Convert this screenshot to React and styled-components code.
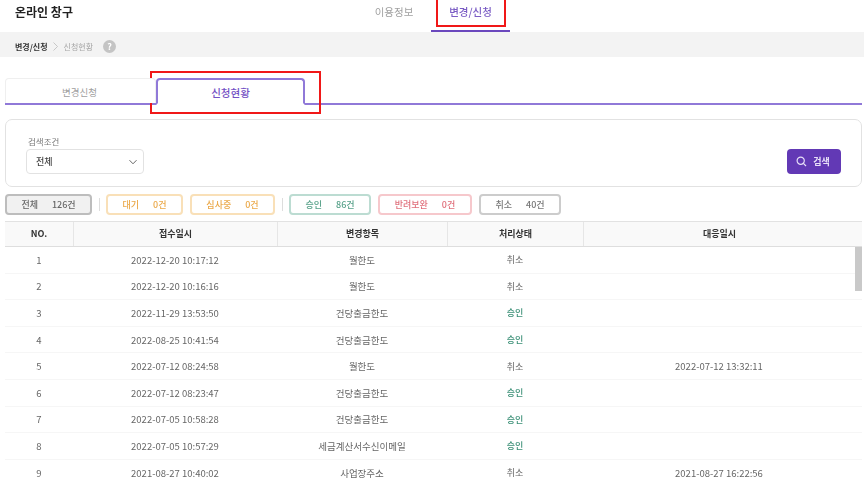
import React from 'react';
import styled, { createGlobalStyle } from 'styled-components';

const Global = createGlobalStyle`
  html, body { margin: 0; padding: 0; background: #fff; }
  body { width: 864px; height: 480px; overflow: hidden; font-family: "Noto Sans CJK KR", "Noto Sans", sans-serif; color: #444; }
  * { box-sizing: border-box; }
`;

const Page = styled.div`
  width: 864px;
  height: 480px;
  overflow: hidden;
  display: flex;
  flex-direction: column;
  filter: blur(0.35px);
`;
const Header = styled.header`
  height: 32px;
  flex: none;
  display: flex;
  padding-left: 15px;
`;
const Title = styled.h1`
  margin: 0;
  width: 358px;
  font-size: 12px;
  line-height: 23px;
  font-weight: 700;
  color: #222;
`;
const Nav = styled.nav`
  display: flex;
`;
const NavItem = styled.a`
  position: relative;
  width: ${p => p.$w}px;
  height: 32px;
  padding-right: ${p => p.$pad || 0}px;
  font-size: 10.5px;
  line-height: 24px;
  text-align: center;
  color: ${p => (p.$active ? '#7a5cc4' : '#a0a0a0')};
  font-weight: ${p => (p.$active ? 500 : 400)};
  border-bottom: 2px solid ${p => (p.$active ? '#6a48bd' : 'transparent')};
`;
const RedBox = styled.span`
  position: absolute;
  pointer-events: none;
  border: 2px solid #f01818;
  left: ${p => p.$l}px;
  top: ${p => p.$t}px;
  width: ${p => p.$w}px;
  height: ${p => p.$h}px;
`;
const Crumbs = styled.div`
  height: 25px;
  flex: none;
  background: #f3f3f3;
  display: flex;
  align-items: center;
  padding: 3px 0 0 15px;
  font-size: 8px;
`;
const CrumbStrong = styled.b`
  color: #333;
  font-weight: 700;
`;
const CrumbNow = styled.span`
  color: #a8a8a8;
`;
const Chevron = styled.svg`
  width: 5px;
  height: 9px;
  margin: 0 6px 0 5px;
`;
const Help = styled.span`
  width: 13px;
  height: 13px;
  margin-left: 10px;
  border-radius: 50%;
  background: #c4c4c4;
  color: #fff;
  font-size: 9px;
  font-weight: 700;
  line-height: 13px;
  text-align: center;
`;
const Tabs = styled.div`
  position: relative;
  margin: 21px 2px 0 5px;
  height: 27px;
  flex: none;
  display: flex;
  border-bottom: 2px solid #9079d8;
`;
const Tab = styled.div`
  height: ${p => (p.$active ? '27px' : '25px')};
  width: ${p => p.$w}px;
  padding-right: ${p => (p.$active ? 0 : 2)}px;
  font-size: ${p => (p.$active ? '10.5px' : '9.5px')};
  line-height: ${p => (p.$active ? 25 : 27)}px;
  text-align: center;
  font-weight: ${p => (p.$active ? 500 : 400)};
  color: ${p => (p.$active ? '#7350c4' : '#a0a0a0')};
  background: #fff;
  border: ${p => (p.$active ? '2px solid #9079d8' : '1px solid #efefef')};
  border-bottom: ${p => (p.$active ? '2px solid #fff' : 'none')};
  border-radius: 4px 4px 0 0;
  z-index: 1;
`;
const Panel = styled.section`
  margin: 14px 2px 0 5px;
  height: 68px;
  flex: none;
  border: 1px solid #e2e2e2;
  border-radius: 7px;
  display: flex;
  justify-content: space-between;
  align-items: flex-end;
  padding: 0 20px 12px 20px;
`;
const Field = styled.div`
  display: flex;
  flex-direction: column;
`;
const FieldLabel = styled.label`
  font-size: 8.5px;
  line-height: 12px;
  color: #777;
  margin: 0 0 2px 2px;
`;
const Select = styled.div`
  width: 118px;
  height: 25px;
  border: 1px solid #e2e2e2;
  border-radius: 4px;
  display: flex;
  align-items: center;
  justify-content: space-between;
  padding: 0 5px 0 9px;
  font-size: 9px;
  font-weight: 500;
  color: #444;
`;
const SearchButton = styled.button`
  width: 54px;
  height: 25px;
  border: 0;
  border-radius: 4px;
  background: #6239b5;
  color: #e8e0f8;
  display: flex;
  align-items: center;
  justify-content: center;
  gap: 6px;
  padding: 0 2px 0 0;
  font: 700 9px "Noto Sans CJK KR", sans-serif;
`;
const Chips = styled.div`
  margin: 7px 0 0 5px;
  height: 21px;
  flex: none;
  display: flex;
  align-items: center;
  gap: 7px;
`;
const Chip = styled.div`
  width: ${p => p.$w}px;
  height: 21px;
  border-radius: 4px;
  border: 2px solid ${p => p.$border};
  background: ${p => p.$bg || '#fff'};
  color: ${p => p.$color};
  font-size: 9px;
  font-weight: 500;
  display: flex;
  align-items: center;
  justify-content: center;
  gap: 14px;
`;
const Sep = styled.span`
  width: 1px;
  height: 13px;
  margin: 0 -0.5px;
  background: #ddd;
`;
const Table = styled.div`
  margin: 6px 2px 0 5px;
  flex: 1;
  min-height: 0;
  position: relative;
  overflow: hidden;
  border-top: 1px solid #e2e2e2;
`;
const Row = styled.div`
  display: grid;
  grid-template-columns: 68px 204px 170px 136px 272px 7px;
  height: 26.6px;
  align-items: center;
  text-align: center;
  font-size: 9.5px;
  color: #666;
  border-bottom: 1px solid #f6f6f6;
`;
const HeadRow = styled(Row)`
  height: 25px;
  align-items: stretch;
  background: #f9f9f9;
  border-bottom: 1px solid #dedede;
  font-size: 9px;
  color: #333;
  font-weight: 700;
`;
const HeadCell = styled.div`
  line-height: 24px;
  border-left: ${p => (p.$first ? 'none' : '1px solid #e6e6e6')};
`;
const Status = styled.div`
  font-size: 9px;
  color: ${p => (p.$ok ? '#3a8f76' : '#666')};
  font-weight: ${p => (p.$ok ? 500 : 400)};
`;
const Thumb = styled.div`
  position: absolute;
  right: 0;
  top: 25px;
  width: 7px;
  height: 44px;
  background: #c9c9c9;
`;

const rows = [
  [1, '2022-12-20 10:17:12', '월한도', '취소', ''],
  [2, '2022-12-20 10:16:16', '월한도', '취소', ''],
  [3, '2022-11-29 13:53:50', '건당출금한도', '승인', ''],
  [4, '2022-08-25 10:41:54', '건당출금한도', '승인', ''],
  [5, '2022-07-12 08:24:58', '월한도', '취소', '2022-07-12 13:32:11'],
  [6, '2022-07-12 08:23:47', '건당출금한도', '승인', ''],
  [7, '2022-07-05 10:58:28', '건당출금한도', '승인', ''],
  [8, '2022-07-05 10:57:29', '세금계산서수신이메일', '승인', ''],
  [9, '2021-08-27 10:40:02', '사업장주소', '취소', '2021-08-27 16:22:56'],
];

export default function App() {
  return (
    <Page>
      <Global />
      <Header>
        <Title>온라인 창구</Title>
        <Nav>
          <NavItem $w={58} $pad={16}>이용정보</NavItem>
          <NavItem $w={79} $active>
            변경/신청
            <RedBox $l={5} $t={-2} $w={70} $h={29} />
          </NavItem>
        </Nav>
      </Header>
      <Crumbs>
        <CrumbStrong>변경/신청</CrumbStrong>
        <Chevron viewBox="0 0 5 9" fill="none" stroke="#bbb" strokeWidth="0.8"><path d="M0.5 0.5 4.5 4.5 0.5 8.5" /></Chevron>
        <CrumbNow>신청현황</CrumbNow>
        <Help>?</Help>
      </Crumbs>
      <Tabs>
        <Tab $w={151}>변경신청</Tab>
        <Tab $w={149} $active>신청현황</Tab>
        <RedBox $l={145} $t={-7} $w={171} $h={43} />
      </Tabs>
      <Panel>
        <Field>
          <FieldLabel>검색조건</FieldLabel>
          <Select>
            전체
            <svg width="10" height="10" viewBox="0 0 10 10" fill="none" stroke="#666" strokeWidth="1"><path d="M1.5 3.2 5 6.8 8.5 3.2" /></svg>
          </Select>
        </Field>
        <SearchButton>
          <svg width="11" height="11" viewBox="0 0 11 11" fill="none" stroke="#e8e0f8" strokeWidth="1.2"><circle cx="4.7" cy="4.7" r="3.6" /><path d="M7.4 7.4 10 10" /></svg>
          검색
        </SearchButton>
      </Panel>
      <Chips>
        <Chip $w={87} $border="#bdbdbd" $bg="#f1f1f1" $color="#666"><span>전체</span><span>126건</span></Chip>
        <Sep />
        <Chip $w={77} $border="#f9e0b8" $color="#eba94a"><span>대기</span><span>0건</span></Chip>
        <Chip $w={85} $border="#f9e0b8" $color="#eba94a"><span>심사중</span><span>0건</span></Chip>
        <Sep />
        <Chip $w={82} $border="#bcdcd2" $color="#55a088"><span>승인</span><span>86건</span></Chip>
        <Chip $w={94} $border="#f6c8cc" $color="#e0707c"><span>반려보완</span><span>0건</span></Chip>
        <Chip $w={82} $border="#cccccc" $color="#777"><span>취소</span><span>40건</span></Chip>
      </Chips>
      <Table>
        <HeadRow>
          <HeadCell $first>NO.</HeadCell>
          <HeadCell>접수일시</HeadCell>
          <HeadCell>변경항목</HeadCell>
          <HeadCell>처리상태</HeadCell>
          <HeadCell>대응일시</HeadCell>
        </HeadRow>
        {rows.map(r => (
          <Row key={r[0]}>
            <div>{r[0]}</div>
            <div>{r[1]}</div>
            <div>{r[2]}</div>
            <Status $ok={r[3] === '승인'}>{r[3]}</Status>
            <div>{r[4]}</div>
          </Row>
        ))}
        <Thumb />
      </Table>
    </Page>
  );
}
